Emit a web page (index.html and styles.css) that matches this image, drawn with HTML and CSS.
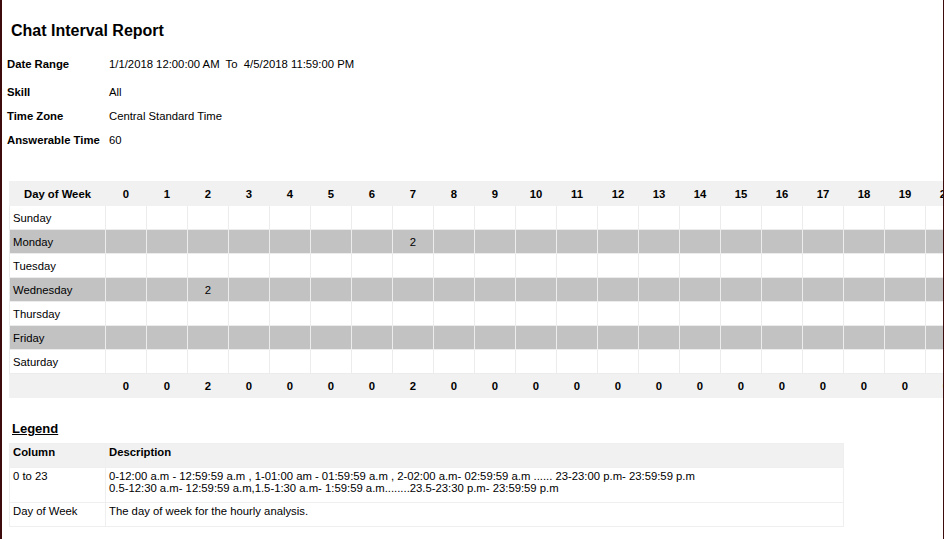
FILE: index.html
```html
<!DOCTYPE html>
<html>
<head>
<meta charset="utf-8">
<link rel="stylesheet" href="styles.css">
</head>
<body>
<div class="frame">
  <h1 class="title">Chat Interval Report</h1>
  <div class="info">
    <div class="info-row first"><span class="label">Date Range</span><span class="value">1/1/2018 12:00:00 AM&nbsp; To&nbsp; 4/5/2018 11:59:00 PM</span></div>
    <div class="info-row"><span class="label">Skill</span><span class="value">All</span></div>
    <div class="info-row"><span class="label">Time Zone</span><span class="value">Central Standard Time</span></div>
    <div class="info-row"><span class="label">Answerable Time</span><span class="value">60</span></div>
  </div>

  <table class="grid">
    <colgroup>
      <col class="c-day">
      <col class="c-h"><col class="c-h"><col class="c-h"><col class="c-h"><col class="c-h"><col class="c-h">
      <col class="c-h"><col class="c-h"><col class="c-h"><col class="c-h"><col class="c-h"><col class="c-h">
      <col class="c-h"><col class="c-h"><col class="c-h"><col class="c-h"><col class="c-h"><col class="c-h">
      <col class="c-h"><col class="c-h"><col class="c-h"><col class="c-h"><col class="c-h"><col class="c-h">
    </colgroup>
    <thead>
      <tr class="head">
        <th>Day of Week</th>
        <th>0</th><th>1</th><th>2</th><th>3</th><th>4</th><th>5</th><th>6</th><th>7</th>
        <th>8</th><th>9</th><th>10</th><th>11</th><th>12</th><th>13</th><th>14</th><th>15</th>
        <th>16</th><th>17</th><th>18</th><th>19</th><th>20</th><th>21</th><th>22</th><th>23</th>
      </tr>
    </thead>
    <tbody>
      <tr><td class="day">Sunday</td><td></td><td></td><td></td><td></td><td></td><td></td><td></td><td></td><td></td><td></td><td></td><td></td><td></td><td></td><td></td><td></td><td></td><td></td><td></td><td></td><td></td><td></td><td></td><td></td></tr>
      <tr class="alt"><td class="day">Monday</td><td></td><td></td><td></td><td></td><td></td><td></td><td></td><td>2</td><td></td><td></td><td></td><td></td><td></td><td></td><td></td><td></td><td></td><td></td><td></td><td></td><td></td><td></td><td></td><td></td></tr>
      <tr><td class="day">Tuesday</td><td></td><td></td><td></td><td></td><td></td><td></td><td></td><td></td><td></td><td></td><td></td><td></td><td></td><td></td><td></td><td></td><td></td><td></td><td></td><td></td><td></td><td></td><td></td><td></td></tr>
      <tr class="alt"><td class="day">Wednesday</td><td></td><td></td><td>2</td><td></td><td></td><td></td><td></td><td></td><td></td><td></td><td></td><td></td><td></td><td></td><td></td><td></td><td></td><td></td><td></td><td></td><td></td><td></td><td></td><td></td></tr>
      <tr><td class="day">Thursday</td><td></td><td></td><td></td><td></td><td></td><td></td><td></td><td></td><td></td><td></td><td></td><td></td><td></td><td></td><td></td><td></td><td></td><td></td><td></td><td></td><td></td><td></td><td></td><td></td></tr>
      <tr class="alt"><td class="day">Friday</td><td></td><td></td><td></td><td></td><td></td><td></td><td></td><td></td><td></td><td></td><td></td><td></td><td></td><td></td><td></td><td></td><td></td><td></td><td></td><td></td><td></td><td></td><td></td><td></td></tr>
      <tr><td class="day">Saturday</td><td></td><td></td><td></td><td></td><td></td><td></td><td></td><td></td><td></td><td></td><td></td><td></td><td></td><td></td><td></td><td></td><td></td><td></td><td></td><td></td><td></td><td></td><td></td><td></td></tr>
    </tbody>
    <tfoot>
      <tr class="foot">
        <td></td>
        <td>0</td><td>0</td><td>2</td><td>0</td><td>0</td><td>0</td><td>0</td><td>2</td>
        <td>0</td><td>0</td><td>0</td><td>0</td><td>0</td><td>0</td><td>0</td><td>0</td>
        <td>0</td><td>0</td><td>0</td><td>0</td><td>0</td><td>0</td><td>0</td><td>0</td>
      </tr>
    </tfoot>
  </table>

  <h2 class="legend-title">Legend</h2>
  <table class="legend">
    <colgroup><col class="l-col"><col class="l-desc"></colgroup>
    <thead>
      <tr><th>Column</th><th>Description</th></tr>
    </thead>
    <tbody>
      <tr><td>0 to 23</td><td>0-12:00 a.m - 12:59:59 a.m , 1-01:00 am - 01:59:59 a.m , 2-02:00 a.m- 02:59:59 a.m ...... 23-23:00 p.m- 23:59:59 p.m<br>0.5-12:30 a.m- 12:59:59 a.m,1.5-1:30 a.m- 1:59:59 a.m........23.5-23:30 p.m- 23:59:59 p.m</td></tr>
      <tr><td>Day of Week</td><td>The day of week for the hourly analysis.</td></tr>
    </tbody>
  </table>
</div>
</body>
</html>
```

FILE: styles.css
```css
* { box-sizing: border-box; }

html, body {
  margin: 0;
  padding: 0;
  background: #ffffff;
  overflow: hidden;
}

body {
  font-family: "Liberation Sans", Arial, sans-serif;
  font-size: 11.3px;
  color: #000;
}

.frame {
  width: 944px;
  height: 539px;
  border-left: 2px solid #3d0b0b;
  border-right: 1px solid #3d0b0b;
  overflow: hidden;
}

.title {
  margin: 22px 0 0 9px;
  font-size: 16px;
  line-height: 18px;
  font-weight: bold;
}

.info {
  margin: 12px 0 0 5px;
}

.info-row {
  display: flex;
  align-items: center;
  height: 24px;
}

.info-row.first {
  margin-bottom: 4px;
}

.label {
  width: 102px;
  font-weight: bold;
  flex: none;
}

.grid {
  margin: 29px 0 0 7px;
  border-collapse: collapse;
  table-layout: fixed;
  width: 1080px;
}

.c-day { width: 96px; }
.c-h { width: 41px; }

.grid th,
.grid td {
  border: 1px solid #ececec;
  padding: 0 2px;
  text-align: center;
  vertical-align: middle;
  white-space: nowrap;
  overflow: hidden;
}

.grid tr { height: 24px; }

.grid .head th {
  background: #f1f1f1;
  border-color: #f1f1f1;
  font-weight: bold;
}

.grid td.day {
  text-align: left;
  padding-left: 3px;
}

.grid tr.alt td {
  background: #c2c2c2;
}

.grid .foot td {
  background: #f1f1f1;
  border-color: #f1f1f1;
  font-weight: bold;
}

.legend-title {
  margin: 23px 0 0 10px;
  font-size: 13px;
  line-height: 15px;
  font-weight: bold;
  text-decoration: underline;
}

.legend {
  margin: 7px 0 0 7px;
  border-collapse: collapse;
  table-layout: fixed;
  width: 834px;
  border: 1px solid #efefef;
}

.l-col { width: 96px; }
.l-desc { width: 738px; }

.legend th,
.legend td {
  border: 1px solid #efefef;
  padding: 2px 3px 9px;
  text-align: left;
  vertical-align: top;
  line-height: 12px;
}

.legend tbody tr:first-child td {
  padding-bottom: 8px;
}

.legend th {
  background: #f1f1f1;
  font-weight: bold;
}
```
